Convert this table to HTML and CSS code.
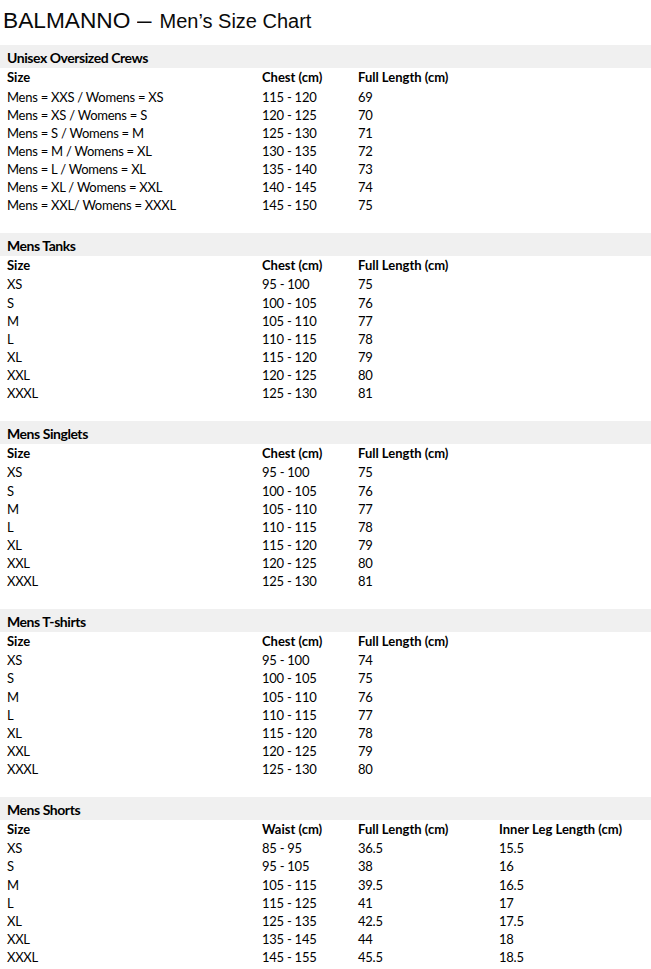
FILE: index.html
```html
<!DOCTYPE html>
<html lang="en">
<head>
<meta charset="utf-8">
<title>BALMANNO – Men’s Size Chart</title>
<link rel="stylesheet" href="styles.css">
</head>
<body>
<h1 class="title"><span class="brand">BALMANNO <span class="dash">–</span></span> <span class="sub">Men’s Size Chart</span></h1>

<section class="chart">
  <h2 class="chart-title">Unisex Oversized Crews</h2>
  <div class="grid">
    <span class="head">Size</span><span class="head">Chest (cm)</span><span class="head">Full Length (cm)</span><span></span>
    <span>Mens = XXS / Womens = XS</span><span>115 - 120</span><span>69</span><span></span>
    <span>Mens = XS / Womens = S</span><span>120 - 125</span><span>70</span><span></span>
    <span>Mens = S / Womens = M</span><span>125 - 130</span><span>71</span><span></span>
    <span>Mens = M / Womens = XL</span><span>130 - 135</span><span>72</span><span></span>
    <span>Mens = L / Womens = XL</span><span>135 - 140</span><span>73</span><span></span>
    <span>Mens = XL / Womens = XXL</span><span>140 - 145</span><span>74</span><span></span>
    <span>Mens = XXL/ Womens = XXXL</span><span>145 - 150</span><span>75</span><span></span>
  </div>
</section>

<section class="chart">
  <h2 class="chart-title">Mens Tanks</h2>
  <div class="grid">
    <span class="head">Size</span><span class="head">Chest (cm)</span><span class="head">Full Length (cm)</span><span></span>
    <span>XS</span><span>95 - 100</span><span>75</span><span></span>
    <span>S</span><span>100 - 105</span><span>76</span><span></span>
    <span>M</span><span>105 - 110</span><span>77</span><span></span>
    <span>L</span><span>110 - 115</span><span>78</span><span></span>
    <span>XL</span><span>115 - 120</span><span>79</span><span></span>
    <span>XXL</span><span>120 - 125</span><span>80</span><span></span>
    <span>XXXL</span><span>125 - 130</span><span>81</span><span></span>
  </div>
</section>

<section class="chart">
  <h2 class="chart-title">Mens Singlets</h2>
  <div class="grid">
    <span class="head">Size</span><span class="head">Chest (cm)</span><span class="head">Full Length (cm)</span><span></span>
    <span>XS</span><span>95 - 100</span><span>75</span><span></span>
    <span>S</span><span>100 - 105</span><span>76</span><span></span>
    <span>M</span><span>105 - 110</span><span>77</span><span></span>
    <span>L</span><span>110 - 115</span><span>78</span><span></span>
    <span>XL</span><span>115 - 120</span><span>79</span><span></span>
    <span>XXL</span><span>120 - 125</span><span>80</span><span></span>
    <span>XXXL</span><span>125 - 130</span><span>81</span><span></span>
  </div>
</section>

<section class="chart">
  <h2 class="chart-title">Mens T-shirts</h2>
  <div class="grid">
    <span class="head">Size</span><span class="head">Chest (cm)</span><span class="head">Full Length (cm)</span><span></span>
    <span>XS</span><span>95 - 100</span><span>74</span><span></span>
    <span>S</span><span>100 - 105</span><span>75</span><span></span>
    <span>M</span><span>105 - 110</span><span>76</span><span></span>
    <span>L</span><span>110 - 115</span><span>77</span><span></span>
    <span>XL</span><span>115 - 120</span><span>78</span><span></span>
    <span>XXL</span><span>120 - 125</span><span>79</span><span></span>
    <span>XXXL</span><span>125 - 130</span><span>80</span><span></span>
  </div>
</section>

<section class="chart">
  <h2 class="chart-title">Mens Shorts</h2>
  <div class="grid">
    <span class="head">Size</span><span class="head">Waist (cm)</span><span class="head">Full Length (cm)</span><span class="head">Inner Leg Length (cm)</span>
    <span>XS</span><span>85 - 95</span><span>36.5</span><span>15.5</span>
    <span>S</span><span>95 - 105</span><span>38</span><span>16</span>
    <span>M</span><span>105 - 115</span><span>39.5</span><span>16.5</span>
    <span>L</span><span>115 - 125</span><span>41</span><span>17</span>
    <span>XL</span><span>125 - 135</span><span>42.5</span><span>17.5</span>
    <span>XXL</span><span>135 - 145</span><span>44</span><span>18</span>
    <span>XXXL</span><span>145 - 155</span><span>45.5</span><span>18.5</span>
  </div>
</section>
</body>
</html>
```

FILE: styles.css
```css
html, body {
  margin: 0;
  padding: 0;
  background: #ffffff;
}

body {
  color: #000000;
  font-family: "Lato", "Liberation Sans", sans-serif;
  font-size: 13px;
}

.title {
  margin: 0 0 6px 0;
  padding-left: 3px;
  height: 39px;
  font-family: "Liberation Sans", Arial, sans-serif;
  font-weight: normal;
  line-height: 39px;
  color: #0a0a0a;
  white-space: nowrap;
}

.brand {
  font-size: 22.7px;
}

.dash {
  display: inline-block;
  transform: scaleX(1.15);
  transform-origin: left center;
}

.sub {
  margin-left: 3px;
  font-size: 20px;
  line-height: 1;
}

.chart {
  margin: 0;
}

.chart-title {
  margin: 0;
  height: 22px;
  padding: 1px 0 0 7px;
  background: #f0f0f0;
  font-size: 14px;
  font-weight: bold;
  letter-spacing: -0.45px;
  line-height: 23px;
}

.grid {
  display: grid;
  grid-template-columns: 255px 96px 141px 1fr;
  grid-template-rows: 19.5px repeat(7, 18.17px);
  align-items: start;
  padding-left: 7px;
  margin-bottom: 18.33px;
  line-height: 18.17px;
  letter-spacing: -0.25px;
  white-space: nowrap;
}

.head {
  font-weight: bold;
  letter-spacing: 0;
}
```
